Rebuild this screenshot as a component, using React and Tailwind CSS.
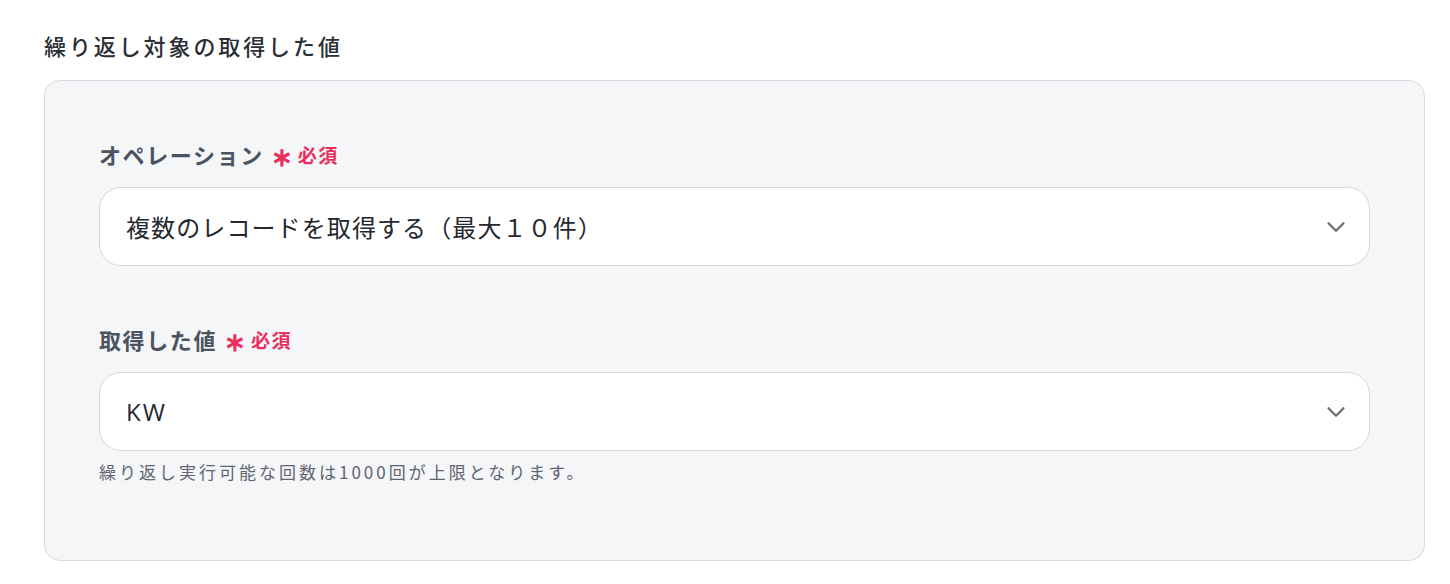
import { ChevronDown } from 'lucide-react';

const font = { fontFamily: '"Noto Sans CJK JP", "Noto Sans", sans-serif' };

function Field({ label, value, latin, help }) {
    return (
        <div>
            <div className="flex items-center h-[30px] mb-[18px]">
                <span className="text-[22px] font-bold tracking-[1.6px] text-[#4b5260] leading-[30px]">{label}</span>
                <span className="ml-[7px] text-[26px] font-bold text-[#ea2f5f] leading-none mt-[1px]">∗</span>
                <span className="ml-[5px] text-[19px] font-bold tracking-[1.5px] text-[#ea2f5f] leading-[30px] mt-[2px]">必須</span>
            </div>
            <div className="flex items-center justify-between h-[79px] bg-white border border-[#d3d8df] rounded-[22px] pl-[26px] pr-[18px]">
                {latin ? (
                    <span
                        className="text-[24px] tracking-[2px] text-[#24272d]"
                        style={{ fontFamily: '"Open Sans", "Noto Sans CJK JP", sans-serif' }}
                    >
                        {value}
                    </span>
                ) : (
                    <span className="text-[24px] tracking-[1.1px] text-[#24272d]">{value}</span>
                )}
                <ChevronDown className="w-[30px] h-[30px] text-[#6b6e73]" strokeWidth={1.8} />
            </div>
            {help && (
                <p className="mt-[9px] text-[17px] tracking-[3px] leading-[24px] text-[#5f6570]">{help}</p>
            )}
        </div>
    );
}

export default function App() {
    return (
        <div className="w-[1450px] h-[584px] bg-white pt-[30px] pl-[44px] pr-[25px]" style={font}>
            <h2 className="text-[22px] leading-[30px] font-medium tracking-[2.9px] text-[#2b2f36] mb-[20px]">
                繰り返し対象の取得した値
            </h2>
            <div className="bg-[#f5f6f8] border border-[#d6dbe2] rounded-[16px] pt-[58px] pb-[76px] px-[54px]">
                <div className="flex flex-col gap-[58px]">
                    <Field label="オペレーション" value="複数のレコードを取得する（最大１０件）" />
                    <Field
                        label="取得した値"
                        value="KW"
                        latin
                        help="繰り返し実行可能な回数は1000回が上限となります。"
                    />
                </div>
            </div>
        </div>
    );
}
